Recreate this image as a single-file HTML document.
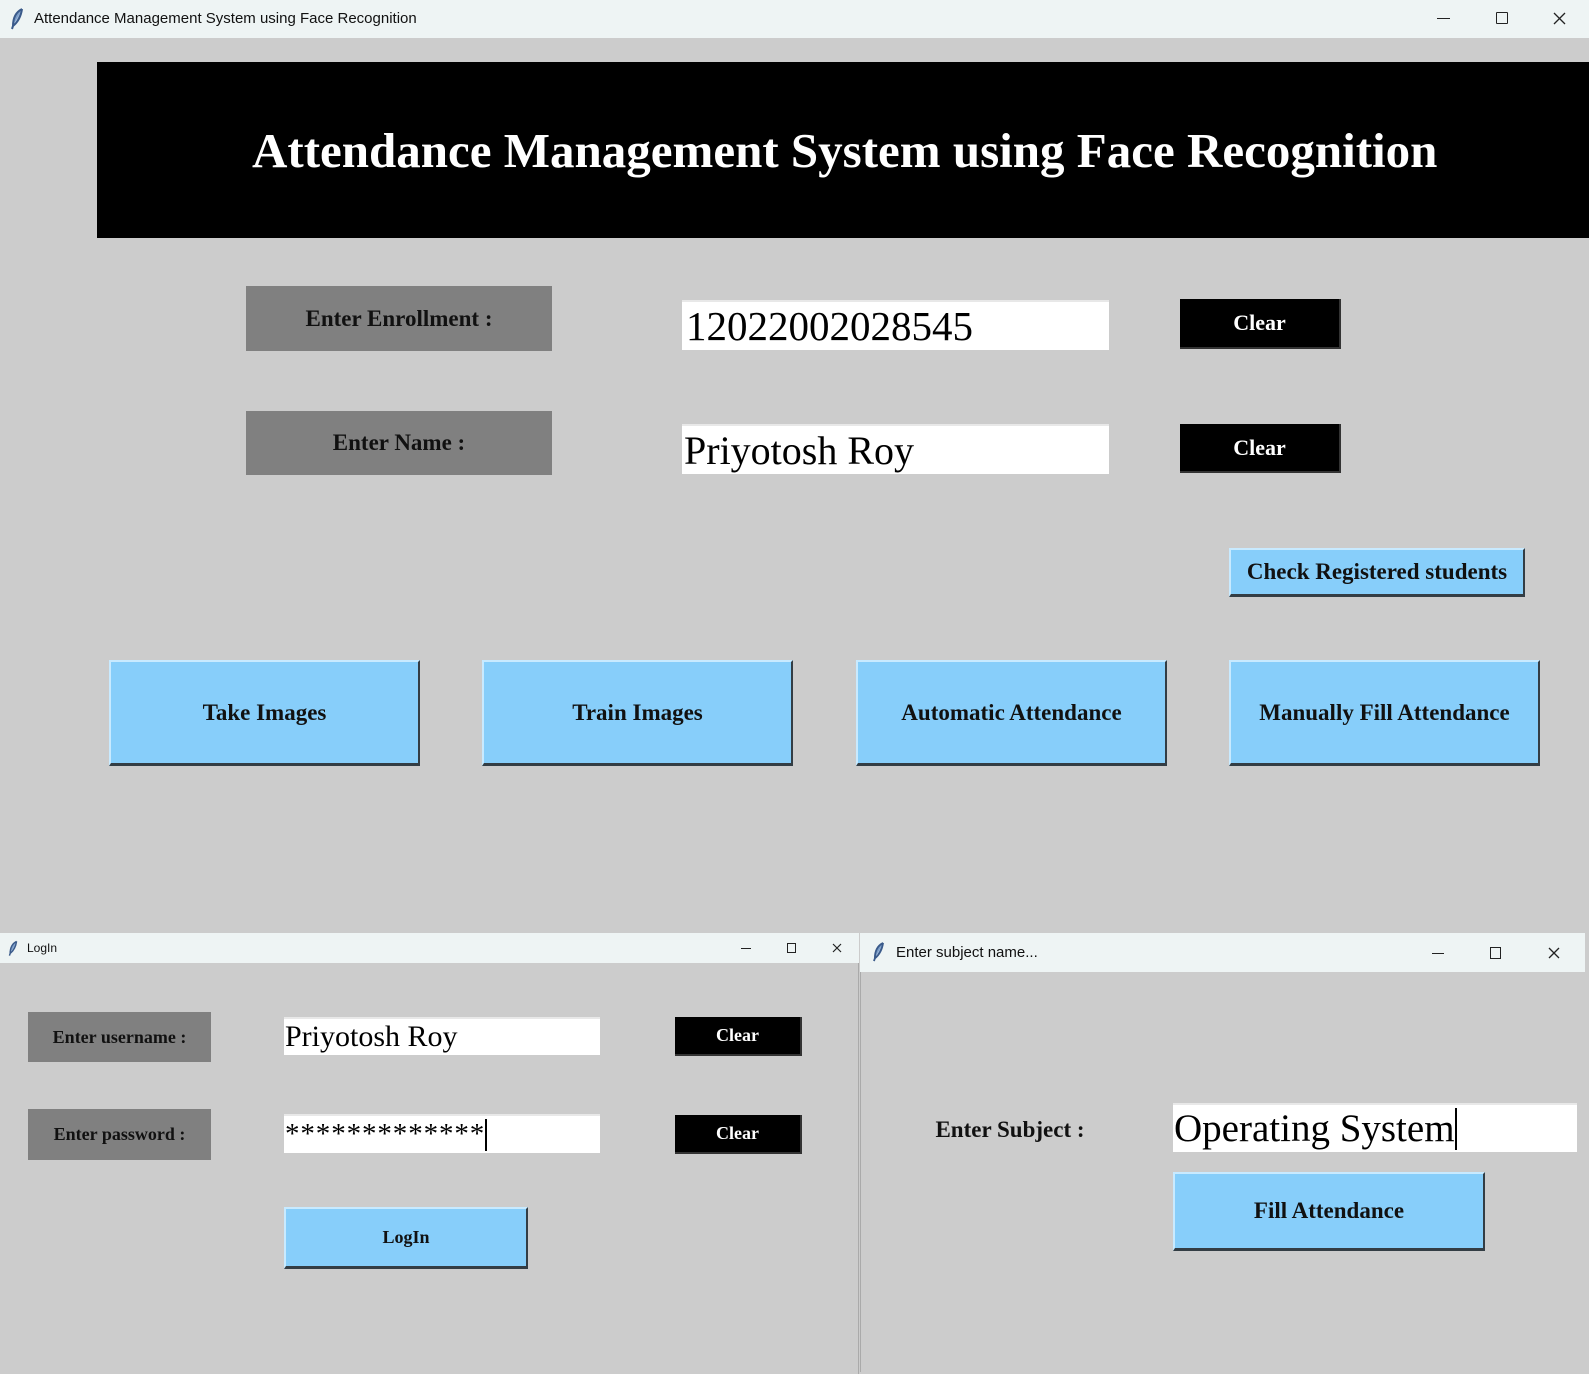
<!DOCTYPE html>
<html><head><meta charset="utf-8"><style>
*{margin:0;padding:0;box-sizing:border-box}
body{width:1589px;height:1374px;background:#cccccc;position:relative;overflow:hidden;font-family:"Liberation Serif",serif}
.a{position:absolute}
.tb{background:#eef4f4;font-family:"Liberation Sans",sans-serif;color:#111}
.c{display:flex;align-items:center;justify-content:center;font-weight:bold}
.lab{background:#808080;color:#111}
.ent{background:#fff;border-top:2px solid #e8e8e8;color:#000;display:flex;align-items:center;white-space:nowrap;overflow:hidden}
.clr{background:#000;color:#fff;border-bottom:2px solid #333;border-right:2px solid #333}
.btn{background:#87cefa;color:#111;border-top:2px solid #c8eaff;border-left:2px solid #c8eaff;border-bottom:3px solid #333d44;border-right:2px solid #333d44}
</style></head><body>
<div class="a tb" style="left:0;top:0;width:1589px;height:38px"></div>
<svg class="a" style="left:10px;top:8px" width="14" height="22" viewBox="0 0 14 22"><path d="M12 1 C6 4 3 10 3 18 L2 21 M12 1 C11 8 8 14 3 18" stroke="#3a5a8a" stroke-width="2" fill="#7a9cc8"/></svg>
<div class="a tb" style="left:34px;top:10px;font-size:15px">Attendance Management System using Face Recognition</div>
<div class="a" style="left:1437px;top:18px;width:13px;height:1px;background:#222"></div>
<div class="a" style="left:1496px;top:12px;width:12px;height:12px;border:1.5px solid #222;border-radius:1px"></div>
<svg class="a" style="left:1553px;top:12px" width="13" height="13"><path d="M1 1L12 12M12 1L1 12" stroke="#222" stroke-width="1.3"/></svg>

<div class="a c" style="left:97px;top:62px;width:1492px;height:176px;background:#000;color:#fff;font-size:49px;justify-content:flex-start;padding-left:155px">Attendance Management System using Face Recognition</div>

<div class="a c lab" style="left:246px;top:286px;width:306px;height:65px;font-size:23px">Enter Enrollment :</div>
<div class="a ent" style="left:682px;top:300px;width:427px;height:50px;font-size:41px;padding-left:4px">12022002028545</div>
<div class="a c clr" style="left:1180px;top:299px;width:161px;height:50px;font-size:22px">Clear</div>

<div class="a c lab" style="left:246px;top:411px;width:306px;height:64px;font-size:23px">Enter Name :</div>
<div class="a ent" style="left:682px;top:424px;width:427px;height:50px;font-size:40px;padding-left:2px">Priyotosh Roy</div>
<div class="a c clr" style="left:1180px;top:424px;width:161px;height:49px;font-size:22px">Clear</div>

<div class="a c btn" style="left:1229px;top:548px;width:296px;height:49px;font-size:23px">Check Registered students</div>

<div class="a c btn" style="left:109px;top:660px;width:311px;height:106px;font-size:23px">Take Images</div>
<div class="a c btn" style="left:482px;top:660px;width:311px;height:106px;font-size:23px">Train Images</div>
<div class="a c btn" style="left:856px;top:660px;width:311px;height:106px;font-size:23px">Automatic Attendance</div>
<div class="a c btn" style="left:1229px;top:660px;width:311px;height:106px;font-size:23px">Manually Fill Attendance</div>

<div class="a" style="left:0;top:933px;width:859px;height:441px;background:#cccccc;border-right:1px solid #aaa"></div>
<div class="a tb" style="left:0;top:933px;width:859px;height:30px"></div>
<svg class="a" style="left:8px;top:940px" width="10" height="17" viewBox="0 0 14 22"><path d="M12 1 C6 4 3 10 3 18 L2 21 M12 1 C11 8 8 14 3 18" stroke="#3a5a8a" stroke-width="2" fill="#7a9cc8"/></svg>
<div class="a tb" style="left:27px;top:941px;font-size:12px">LogIn</div>
<div class="a" style="left:741px;top:948px;width:10px;height:1px;background:#222"></div>
<div class="a" style="left:787px;top:943px;width:9px;height:10px;border:1.3px solid #222"></div>
<svg class="a" style="left:832px;top:943px" width="10" height="10"><path d="M1 1L9 9M9 1L1 9" stroke="#222" stroke-width="1.2"/></svg>

<div class="a c lab" style="left:28px;top:1012px;width:183px;height:50px;font-size:18px">Enter username :</div>
<div class="a ent" style="left:284px;top:1017px;width:316px;height:38px;font-size:30px;padding-left:1px">Priyotosh Roy</div>
<div class="a c clr" style="left:675px;top:1017px;width:127px;height:39px;font-size:18px">Clear</div>

<div class="a c lab" style="left:28px;top:1109px;width:183px;height:51px;font-size:18px">Enter password :</div>
<div class="a ent" style="left:284px;top:1114px;width:316px;height:39px;font-size:29px;letter-spacing:0.9px;padding-left:1px">*************<span style="display:inline-block;width:2px;height:32px;background:#000"></span></div>
<div class="a c clr" style="left:675px;top:1115px;width:127px;height:39px;font-size:18px">Clear</div>

<div class="a c btn" style="left:284px;top:1207px;width:244px;height:62px;font-size:18px">LogIn</div>

<div class="a" style="left:860px;top:933px;width:725px;height:439px;background:#cccccc;border-left:1px solid #aaa"></div>
<div class="a tb" style="left:860px;top:933px;width:725px;height:39px"></div>
<svg class="a" style="left:872px;top:942px" width="13" height="20" viewBox="0 0 14 22"><path d="M12 1 C6 4 3 10 3 18 L2 21 M12 1 C11 8 8 14 3 18" stroke="#3a5a8a" stroke-width="2" fill="#7a9cc8"/></svg>
<div class="a tb" style="left:896px;top:944px;font-size:15px">Enter subject name...</div>
<div class="a" style="left:1432px;top:953px;width:12px;height:1px;background:#222"></div>
<div class="a" style="left:1490px;top:947px;width:11px;height:12px;border:1.4px solid #222"></div>
<svg class="a" style="left:1548px;top:947px" width="12" height="12"><path d="M1 1L11 11M11 1L1 11" stroke="#222" stroke-width="1.3"/></svg>

<div class="a c" style="left:910px;top:1110px;width:200px;height:40px;font-size:23px;color:#111">Enter Subject :</div>
<div class="a ent" style="left:1173px;top:1103px;width:404px;height:49px;font-size:39px;padding-left:1px">Operating System<span style="display:inline-block;width:2px;height:42px;background:#000"></span></div>
<div class="a c btn" style="left:1173px;top:1172px;width:312px;height:79px;font-size:23px">Fill Attendance</div>
</body></html>
